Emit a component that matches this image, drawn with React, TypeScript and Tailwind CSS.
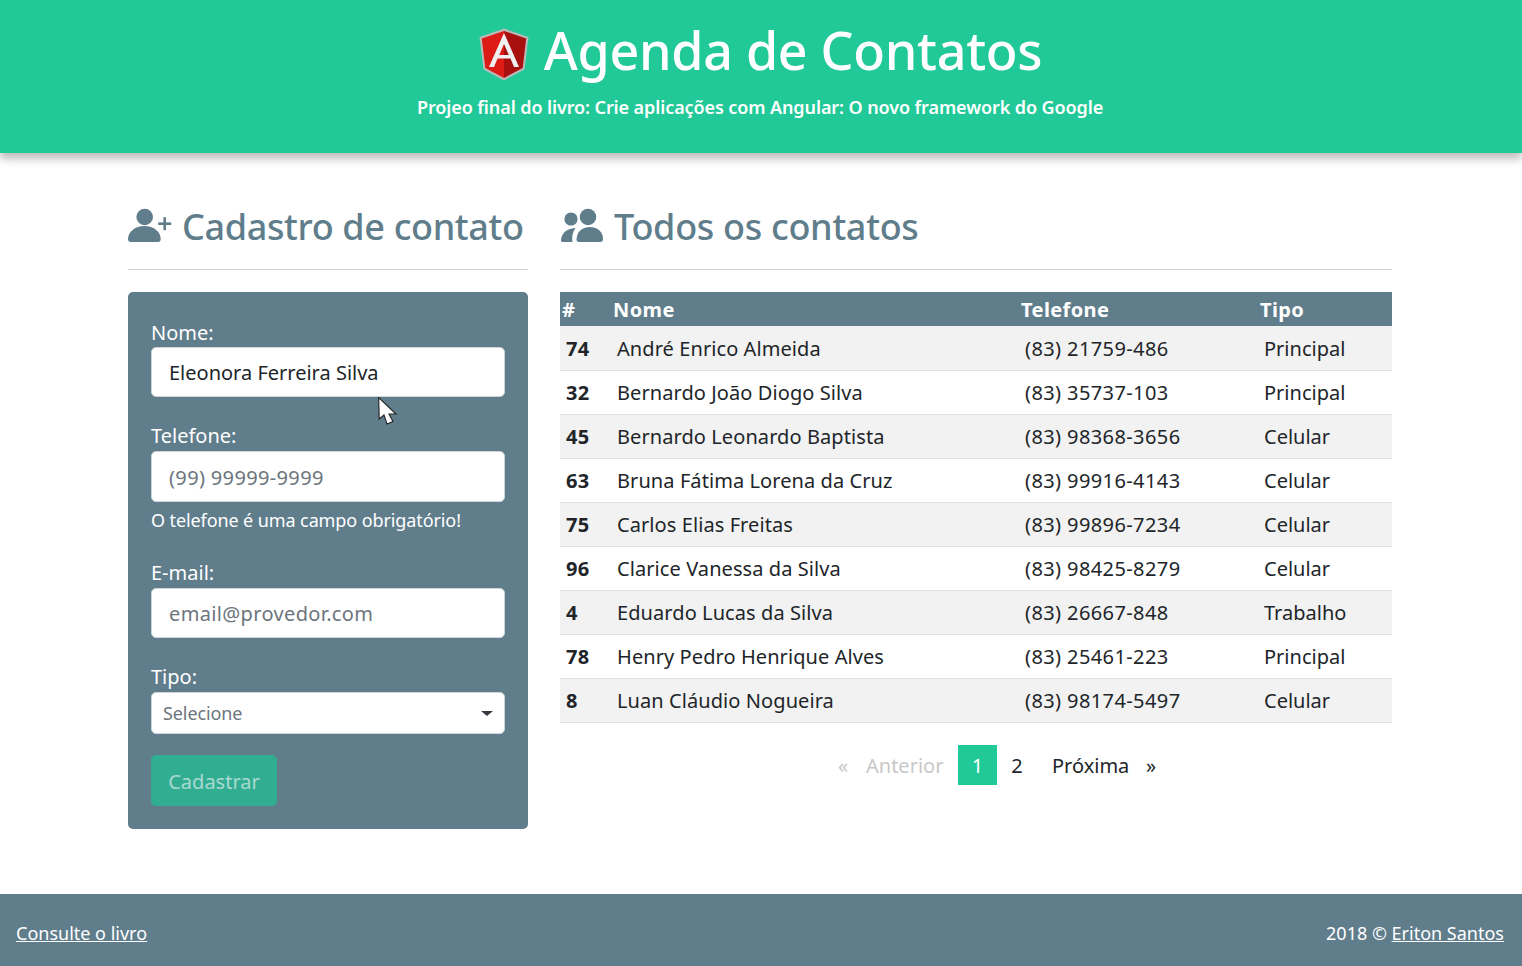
const contatos = [
  { id: 74, nome: "André Enrico Almeida", telefone: "(83) 21759-486", tipo: "Principal" },
  { id: 32, nome: "Bernardo João Diogo Silva", telefone: "(83) 35737-103", tipo: "Principal" },
  { id: 45, nome: "Bernardo Leonardo Baptista", telefone: "(83) 98368-3656", tipo: "Celular" },
  { id: 63, nome: "Bruna Fátima Lorena da Cruz", telefone: "(83) 99916-4143", tipo: "Celular" },
  { id: 75, nome: "Carlos Elias Freitas", telefone: "(83) 99896-7234", tipo: "Celular" },
  { id: 96, nome: "Clarice Vanessa da Silva", telefone: "(83) 98425-8279", tipo: "Celular" },
  { id: 4, nome: "Eduardo Lucas da Silva", telefone: "(83) 26667-848", tipo: "Trabalho" },
  { id: 78, nome: "Henry Pedro Henrique Alves", telefone: "(83) 25461-223", tipo: "Principal" },
  { id: 8, nome: "Luan Cláudio Nogueira", telefone: "(83) 98174-5497", tipo: "Celular" },
];

const AngularLogo = () => (
  <svg width="50" height="53" viewBox="0 0 50 53" className="mt-[5px] -ml-[1px] shrink-0">
    <path d="M25 0.5 L49.5 9 L45.5 41.5 L25 52.5 L4.5 41.5 L0.5 9 Z" fill="#b9b9b9" />
    <path d="M25 3 L2.8 10.6 L6.3 40 L25 50 Z" fill="#dd1b16" />
    <path d="M25 3 L47.2 10.6 L43.7 40 L25 50 Z" fill="#a81010" />
    <path d="M25 5 L10 39 L15 39 L18.5 30.5 L31.5 30.5 L35 39 L40 39 Z M25 16 L29.8 27 L20.2 27 Z" fill="#f0f0f0" fillRule="evenodd" />
  </svg>
);

const UserPlusIcon = () => (
  <svg width="44" height="35" viewBox="0 0 44 35" fill="currentColor" className="mt-[7px] shrink-0">
    <circle cx="16.7" cy="9" r="8.3" />
    <path d="M0 31 C0 24 7 18 16.4 18 C26 18 32.7 24 32.7 31 Q32.7 34 30 34 L3 34 Q0 34 0 31 Z" />
    <rect x="30.2" y="14.4" width="13" height="2.6" />
    <rect x="35.4" y="9.2" width="2.6" height="13" />
  </svg>
);

const UsersIcon = () => (
  <svg width="44" height="35" viewBox="0 0 44 35" fill="currentColor" className="mt-[7px] shrink-0">
    <circle cx="11" cy="11" r="6.6" />
    <circle cx="28" cy="9" r="8.3" />
    <path d="M1 33 C1 26 6 20.5 15.5 20 C12.5 24 11.5 29 12.5 34 L3 34 Q1 34 1 33 Z" />
    <path d="M16.5 32 C16.5 24 22 19 30 19 C38 19 43 24 43 31 Q43 34 40 34 L19 34 Q16.5 34 16.5 32 Z" />
  </svg>
);

const Cursor = () => (
  <svg width="20" height="29" viewBox="0 0 20 29" className="absolute left-[250px] top-[105px]">
    <path d="M0.7 0.7 L1.2 22 L6 18 L9 27 L15 24.5 L11 17 L18 17 Z" fill="#fff" stroke="#222" strokeWidth="1.1" />
  </svg>
);

const fieldClass =
  "block h-[50px] w-[354px] rounded-[5px] border border-[#ced4da] bg-white px-[17px] pt-[1px] text-[20px] text-[#212529] outline-none placeholder:text-[#6c757d] placeholder:tracking-[0.35px]";

const labelClass = "block h-[29px] text-[20px] leading-[27px]";

const App = () => {
  return (
    <div className="flex min-h-[966px] flex-col bg-white font-['Noto_Sans',sans-serif] text-[#212529]">
      <header className="relative h-[153px] bg-[#20c997] text-center text-white shadow-[0_6px_8px_rgba(0,0,0,0.25)]">
        <div className="flex items-start justify-center gap-[15px] pt-[23px]">
          <AngularLogo />
          <h1 className="text-[52px] font-medium leading-[53px] tracking-[-0.3px]">Agenda de Contatos</h1>
        </div>
        <p className="-ml-[2px] mt-[14px] text-[18px] font-semibold leading-[24px] tracking-[-0.1px]">
          Projeo final do livro: Crie aplicações com Angular: O novo framework do Google
        </p>
      </header>

      <main className="flex flex-1 gap-[32px] pl-[128px] pt-[48px]">
        <section className="w-[400px]">
          <h2 className="flex h-[69px] items-start gap-[10px] border-b border-[#d0d0d0] text-[36px] font-medium leading-[52px] tracking-[-0.35px] text-[#607d8b]">
            <UserPlusIcon />
            Cadastro de contato
          </h2>

          <form className="relative mt-[22px] h-[537px] rounded-[5px] bg-[#607d8b] px-[23px] pt-[26px] text-white">
            <label className="block h-[29px] text-[20px] leading-[29px]">Nome:</label>
            <input className={fieldClass} defaultValue="Eleonora Ferreira Silva" />

            <label className={`mt-[25px] ${labelClass}`}>Telefone:</label>
            <input className={`${fieldClass} h-[51px]`} placeholder="(99) 99999-9999" />
            <p className="mt-[6px] h-[26px] text-[18px] leading-[25px] tracking-[-0.1px]">O telefone é uma campo obrigatório!</p>

            <label className={`mt-[25px] ${labelClass}`}>E-mail:</label>
            <input className={fieldClass} placeholder="email@provedor.com" />

            <label className={`mt-[25px] ${labelClass}`}>Tipo:</label>
            <div className="flex h-[42px] w-[354px] items-center justify-between rounded-[5px] border border-[#ced4da] bg-white px-[11px] text-[18px] tracking-[-0.1px] text-[#6c757d]">
              Selecione
              <span className="h-0 w-0 border-x-[6px] border-t-[5px] border-x-transparent border-t-[#343a40]" />
            </div>

            <button
              type="button"
              disabled
              className="mt-[21px] block h-[51px] w-[126px] rounded-[5px] bg-[#31ae92] pt-[2px] text-[20px] text-[#a9d9d0]"
            >
              Cadastrar
            </button>
            <Cursor />
          </form>
        </section>

        <section className="w-[832px]">
          <h2 className="flex h-[69px] items-start gap-[10px] border-b border-[#d0d0d0] text-[36px] font-medium leading-[52px] tracking-[-0.3px] text-[#607d8b]">
            <UsersIcon />
            Todos os contatos
          </h2>

          <table className="mt-[22px] w-[832px] table-fixed border-collapse text-[20px]">
            <colgroup>
              <col className="w-[51px]" />
              <col className="w-[408px]" />
              <col className="w-[239px]" />
              <col className="w-[134px]" />
            </colgroup>
            <thead>
              <tr className="h-[34px] bg-[#607d8b] text-left tracking-[0.4px] text-white">
                <th className="px-[2px] pt-[1px] font-bold">#</th>
                <th className="px-[2px] pt-[1px] font-bold">Nome</th>
                <th className="px-[2px] pt-[1px] font-bold">Telefone</th>
                <th className="px-[2px] pt-[1px] font-bold">Tipo</th>
              </tr>
            </thead>
            <tbody>
              {contatos.map((c, i) => (
                <tr key={c.id} className={`h-[44px] border-b border-[#dee2e6] ${i % 2 === 0 ? "bg-[#f2f2f2]" : "bg-white"}`}>
                  <td className="px-[6px] pt-[2px] font-bold tracking-[0.4px]">{c.id}</td>
                  <td className="px-[6px] pt-[2px] tracking-[0.08px]">{c.nome}</td>
                  <td className="px-[6px] pt-[2px] tracking-[0.4px]">{c.telefone}</td>
                  <td className="px-[6px] pt-[2px]">{c.tipo}</td>
                </tr>
              ))}
            </tbody>
          </table>

          <nav className="mt-[22px] flex h-[40px] items-center pl-[278px] text-[20px]">
            <span className="w-[28px] pt-[3px] text-[#c8c8c8]">«</span>
            <span className="w-[92px] pt-[3px] text-[#c8c8c8]">Anterior</span>
            <span className="flex h-[40px] w-[39px] items-center justify-center bg-[#20c997] pt-[3px] text-white">1</span>
            <span className="flex h-[40px] w-[40px] items-center justify-center pt-[3px]">2</span>
            <span className="ml-[15px] w-[94px] pt-[3px]">Próxima</span>
            <span className="pt-[3px]">»</span>
          </nav>
        </section>
      </main>

      <footer className="flex h-[72px] items-center justify-between bg-[#607d8b] pl-[16px] pr-[18px] pt-[7px] text-[18px] text-white">
        <a className="underline" href="#">Consulte o livro</a>
        <span>
          2018 © <a className="underline" href="#">Eriton Santos</a>
        </span>
      </footer>
    </div>
  );
};

export default App;
